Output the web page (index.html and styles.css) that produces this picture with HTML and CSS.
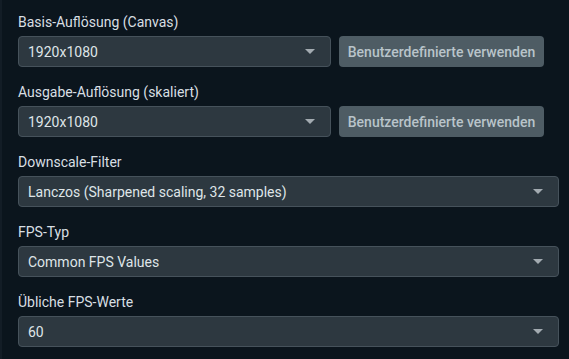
FILE: index.html
```html
<!DOCTYPE html>
<html lang="de">
<head>
    <meta charset="UTF-8">
    <title>Video-Einstellungen</title>
    <link rel="stylesheet" href="styles.css">
</head>
<body>
    <div class="settings">
        <div class="field">
            <label class="field-label">Basis-Auflösung (Canvas)</label>
            <div class="row">
                <div class="select"><span>1920x1080</span><i class="arrow"></i></div>
                <button class="btn">Benutzerdefinierte verwenden</button>
            </div>
        </div>
        <div class="field">
            <label class="field-label">Ausgabe-Auflösung (skaliert)</label>
            <div class="row">
                <div class="select"><span>1920x1080</span><i class="arrow"></i></div>
                <button class="btn">Benutzerdefinierte verwenden</button>
            </div>
        </div>
        <div class="field">
            <label class="field-label">Downscale-Filter</label>
            <div class="select"><span>Lanczos (Sharpened scaling, 32 samples)</span><i class="arrow"></i></div>
        </div>
        <div class="field">
            <label class="field-label">FPS-Typ</label>
            <div class="select"><span>Common FPS Values</span><i class="arrow"></i></div>
        </div>
        <div class="field">
            <label class="field-label">Übliche FPS-Werte</label>
            <div class="select"><span>60</span><i class="arrow"></i></div>
        </div>
    </div>
</body>
</html>
```

FILE: styles.css
```css
body {
    margin: 0;
    padding: 0;
    background-color: #0b151d;
    font-family: Roboto, "Liberation Sans", sans-serif;
    font-size: 14px;
    color: #d8dfe3;
    border-left: 2px solid #131d26;
    height: 359px;
    box-sizing: border-box;
    overflow: hidden;
}
.settings {
    width: 541px;
    padding: 13px 0 0 16px;
    display: flex;
    flex-direction: column;
    gap: 16px;
}
.field-label {
    display: block;
    line-height: 18px;
    margin-bottom: 5px;
}
.row {
    display: grid;
    grid-template-columns: 313px 205px;
    gap: 8px;
}
.select {
    height: 31px;
    box-sizing: border-box;
    background-color: #2d3840;
    border: 1px solid #46525b;
    border-radius: 4px;
    padding: 0 15px 0 9px;
    display: flex;
    align-items: center;
    justify-content: space-between;
    color: #dfe5e8;
}
.arrow {
    width: 0;
    height: 0;
    border-left: 5px solid transparent;
    border-right: 5px solid transparent;
    border-top: 5px solid #a3abb1;
}
.btn {
    height: 31px;
    background-color: #4e5c64;
    border: none;
    border-radius: 4px;
    color: #b9c4ca;
    font-family: Roboto, "Liberation Sans", sans-serif;
    font-size: 14px;
    font-weight: 500;
    padding: 0;
}
```
